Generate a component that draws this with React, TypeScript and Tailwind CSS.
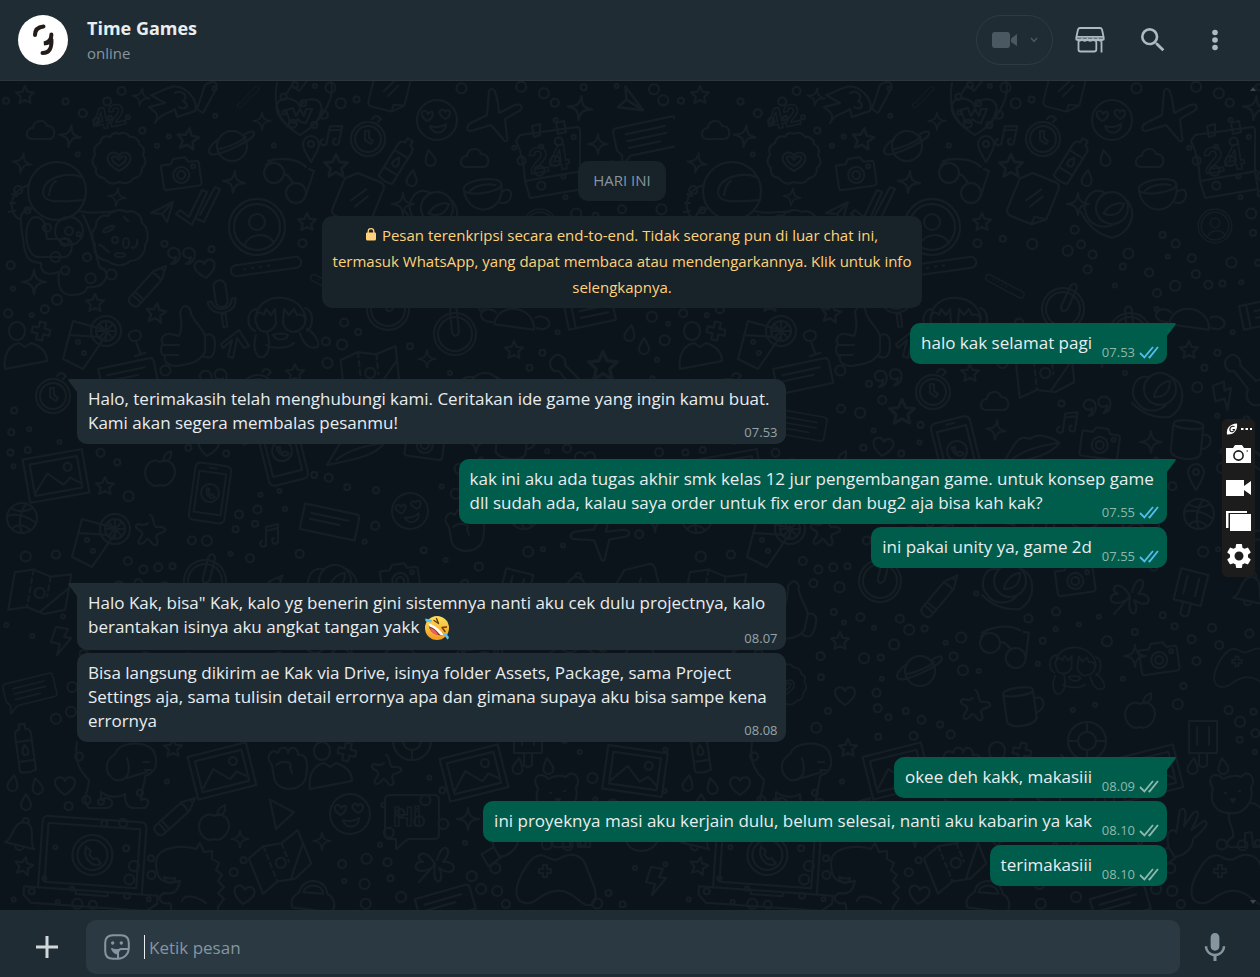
import type { ReactNode } from "react";
import { MdSearch, MdSettings } from "react-icons/md";

type Message = {
  lines: string[];
  time: string;
  sent?: boolean;
  read?: boolean;
  first?: boolean;
  wide?: boolean;
  emoji?: boolean;
};

const messages: Message[] = [
  { lines: ["halo kak selamat pagi"], time: "07.53", sent: true, read: true, first: true },
  {
    lines: [
      "Halo, terimakasih telah menghubungi kami. Ceritakan ide game yang ingin kamu buat.",
      "Kami akan segera membalas pesanmu!",
    ],
    time: "07.53",
    first: true,
    wide: true,
  },
  {
    lines: [
      "kak ini aku ada tugas akhir smk kelas 12 jur pengembangan game. untuk konsep game",
      "dll sudah ada, kalau saya order untuk fix eror dan bug2 aja bisa kah kak?",
    ],
    time: "07.55",
    sent: true,
    read: true,
    first: true,
    wide: true,
  },
  { lines: ["ini pakai unity ya, game 2d"], time: "07.55", sent: true, read: true },
  {
    lines: [
      'Halo Kak, bisa" Kak, kalo yg benerin gini sistemnya nanti aku cek dulu projectnya, kalo',
      "berantakan isinya aku angkat tangan yakk ",
    ],
    time: "08.07",
    first: true,
    wide: true,
    emoji: true,
  },
  {
    lines: [
      "Bisa langsung dikirim ae Kak via Drive, isinya folder Assets, Package, sama Project",
      "Settings aja, sama tulisin detail errornya apa dan gimana supaya aku bisa sampe kena",
      "errornya",
    ],
    time: "08.08",
    wide: true,
  },
  { lines: ["okee deh kakk, makasiii"], time: "08.09", sent: true, first: true },
  { lines: ["ini proyeknya masi aku kerjain dulu, belum selesai, nanti aku kabarin ya kak"], time: "08.10", sent: true },
  { lines: ["terimakasiii"], time: "08.10", sent: true },
];

// Every doodle is drawn around 0,0
const shapes: Record<string, ReactNode> = {
  star: <path d="M0-9 2.6-3.2 9-2.6 4.2 1.8 5.6 8 0 4.8-5.6 8-4.2 1.8-9-2.6-2.6-3.2Z" />,
  sparkle: <path d="M0-11C1-3 3-1 11 0 3 1 1 3 0 11-1 3-3 1-11 0-3-1-1-3 0-11Z" />,
  heart: <path d="M0 9C-6 5-11 0-10-5-8-10-2-10 0-5 2-10 8-10 10-5 11 0 6 5 0 9Z" />,
  cloud: <path d="M-10 8C-17 6-14-3-8-3-8-11 4-13 6-5 14-6 16 6 9 8Z" />,
  drop: <path d="M0-8C3-3 5 0 5 3A5 5 0 0 1-5 3C-5 0-3-3 0-8Z" />,
  plus: <path d="M-3-9H3V-3H9V3H3V9H-3V3H-9V-3H-3Z" strokeLinejoin="round" />,
  badge: (
    <>
      <path d="M0-26C5-29 9-26 11-23 16-24 20-20 20-16 25-13 26-9 24-5 28 0 27 5 23 8 23 14 20 18 15 18 11 24 6 24 0 22-6 25-11 24-15 18-21 18-24 13-23 8-28 4-27-2-24-5-26-11-24-15-19-17-18-23-13-25-9-23-7-27-3-28 0-26Z" />
      <path d="M0 11C-8 7-13 1-11-4-8-9-2-8 0-4 2-8 8-9 11-4 13 1 8 7 0 11Z" />
      <path d="M0 6C-5 3-8 0-7-3-4-5-2-3 0 0 2-3 4-5 7-3 8 0 5 3 0 6Z" />
    </>
  ),
  camera: (
    <>
      <path d="M-18-10H-9L-6-15H6L9-10H16Q19-10 19-7V12Q19 15 16 15H-16Q-19 15-19 12V-10Z" />
      <circle r="8" cy="2" />
      <circle r="4" cy="2" />
      <circle r="2" cx="13" cy="-5" />
    </>
  ),
  planet: (
    <>
      <circle r="15" />
      <path d="M-13-7C-21-2-26 6-21 8-14 11 24-7 22-13 21-16 16-14 12-11M-14 3C-8 3 9-4 14-9" />
    </>
  ),
  astronaut: (
    <>
      <circle cx="0" cy="0" r="29" />
      <path d="M24-14C12-20-14-14-14 2-13 14 8 10 28 9M-8 4C-7-3-5-8-1-10M-28-6C-50 0-49 24-36 29M-24 17C-40 20-37 28-34 48-32 68-28 71-16 72-17 84-6 84 2 81 0 96 4 104 15 104 24 104 30 101 30 96 47 98 53 85 47 78 38 80 41 50 26 24M-10 48H12C18 53 14 65 8 66H-20C-34 62-34 28-22 26-10 26-12 38-10 48M22 20C37 24 45 20 58 21M-42 12-47 12M-42 20-48 21M-40 5-45 3" />
      <circle cx="12" cy="40" r="14" />
      <circle cx="12" cy="40" r="4" />
    </>
  ),
  cookie: (
    <>
      <path d="M-24-10C-25-18-18-23-12-21-8-28 2-28 6-25 14-28 22-22 22-14 29-9 29 3 25 8 26 17 18 24 10 24 4 30-6 29-12 24-21 23-27 16-25 8-29 2-29-6-24-10Z" />
      <ellipse cx="-7" cy="-12" rx="6" ry="2" transform="rotate(-25)" />
      <ellipse cx="6" cy="6" rx="3" ry="5" />
      <circle cx="-5" cy="3" r="3" />
      <ellipse cx="0" cy="18" rx="5" ry="2" />
      <path d="M-21 8C-16 8-15 14-11 15M17 3C19 9 12 13 12 10M4-20 8-16" />
    </>
  ),
  paper: <path d="M-11 2 11-9 5 11 0 3ZM0 3 11-9" />,
  ticks: <path d="M-22 5-18 1-9 8 4-19 9-17-6 16ZM-1 10 6 13 22-20 17-22 2 6" />,
  avatar: (
    <>
      <circle r="28" />
      <circle r="23" />
      <circle r="8" cy="-5" />
      <path d="M-13 19C-8 5 12 5 17 16" />
    </>
  ),
  quotes: <path d="M-8-8A5 5 0 1 0-6 1C-6 4-8 6-11 8-3 8-1-1-3-5-4-7-6-8-8-8ZM7-8A5 5 0 1 0 9 1C9 4 7 6 4 8 12 8 14-1 12-5 11-7 9-8 7-8Z" />,
  pencil: <path d="M-6-14 0-27 6-14V20Q6 25 0 25-6 25-6 20ZM-6-14C-3-11-2-16 0-13 2-16 3-11 6-14M-6 13H6M-6 17H6M-2-22H2" />,
  bar: <path d="M-30-5H30A5 5 0 0 1 30 6H-30A5 5 0 0 1-30-5ZM-22 0H-21M-14 0H-13M-6 0H-5M2 0H3" />,
  mic: <path d="M-6-17A6 6 0 0 1 6-17V-2A6 6 0 0 1-6-2ZM-14-3C-14 14 14 14 14-3H10C10 9-10 9-10-3ZM-2 11H2V24H-2Z" />,
  monkey: (
    <>
      <path d="M-24-4C-22-30 22-30 26-2M-24-12C-34-10-34 6-25 10M25-13C35-10 33 6 27 10M-23 4C-28-6-20-12-16-6L-14-12-9-6-5-12-4 2C-7 12-20 14-23 4ZM3 2 4-12 9-6 14-12 17-6C24-8 28-2 23 6 15 14 6 12 3 2ZM-7 14C-3 12 5 12 8 14 6 20-4 20-7 14ZM-14 24C-7 28 8 28 14 22M-24 14C-28 26-24 38-17 36-11 34-9 22-13 12M20 12C24 26 32 28 37 26 42 22 32 10 27 8" />
    </>
  ),
  thumb: <path d="M-8 0C-4-8-6-16-7-24-4-34 4-30 4-22 10-10 16-8 18 0V16C10 30-4 28-10 30-18 30-24 26-22 20-28 18-26 10-24 8-28 2-22-3-16-2ZM-24 9H-8M-22 19H-9M18-1C26-4 28 2 28 8 28 20 24 24 16 20" />,
  drink: (
    <>
      <path d="M-8-22 28-12 2 26-18 16ZM-12-8 20-6" />
      <circle cx="25" cy="-12" r="15" />
      <circle cx="25" cy="-12" r="10" />
      <path d="M25-22V-2M15-12H35M18-19 32-5M32-19 18-5" />
      <circle cx="-3" cy="-1" r="2" />
      <circle cx="3" cy="10" r="2" />
    </>
  ),
  glass: <path d="M-6-8C-6-14 6-14 6-8 6 0-6 0-6-8ZM0-2 3 12M-3 13 8 11" />,
  person: <path d="M-8-20C-8-32 8-32 8-20 8-8-8-8-8-20ZM-12 18C-14 4-8-6 2-8L8-4 14-8C22-6 30 0 30 10Z" />,
  arrow: <path d="M-14-2 4-16 14 0 9 2 2-8-2 12-7 10-3-6-12 2Z" />,
  card: <path d="M-28-12H24Q28-12 28-8V14H-28ZM-20-4H18M-20 2H10" />,
  glasses: (
    <>
      <circle cx="-14" cy="-6" r="10" />
      <circle cx="8" cy="14" r="10" />
      <path d="M-20-18C-6-22 10-20 18-12M-22-14-14-20M18 16 26-8 21-10M-4-4C0-6 2 0 5 4" />
    </>
  ),
  unicorn: <path d="M-20 20C-14 10-22 8-26 4L-10 0C-18-4-20-6-24-8-10-12 0-24 14-10 20-4 22 2 20 8L2 14 0 6C-8 12-14 10-20 20ZM0-10C8-14 14-6 8-2 16 2 10 8 4 4M22 6 30-18C40-24 44-20 40-12L28 10Z" />,
  stopwatch: (
    <>
      <circle r="17" />
      <circle r="13" />
      <path d="M-3-8V1L3 5 5 2 1-1 1-8ZM4-20Q8-26 13-20L10-17" />
    </>
  ),
  smiley: (
    <>
      <circle r="20" />
      <path d="M-10 1C-16-3-17-8-13-9-11-10-10-8-9-6-7-9-4-9-4-6-4-3-7 0-10 1ZM8-1C3-4 1-8 4-10 6-11 8-9 8-8 9-11 13-10 13-7 13-4 11-2 8-1ZM-7 6C-2 8 5 7 9 4 9 14-4 16-7 6Z" />
    </>
  ),
  bottle: <path d="M-8-14Q-8-20-3-20V-25H3V-20Q8-20 8-14V22Q0 25-8 22ZM-8-8H8M-8 12H8M0-4C2-1 3 1 3 3A3 3 0 0 1-3 3C-3 1-2-1 0-4Z" />,
  plane: <path d="M-6-28C-2-34 2-28 4-6L20-14C28-16 28-10 24-8L10 0 12 18C14 22 10 24 8 20L-4 6-24 12C-30 12-28 6-24 4L-8-4Z" />,
  cup: <path d="M-18-10C-18-20 20-20 20-10 20-2-18-2-18-10ZM-18-10C-18 20 20 20 20-10M19-2C28-8 32 2 24 8 20 10 18 8 16 8M-12-8C-4-14 10-12 14-10" />,
  tablet: <path d="M-10-24H14Q20-24 20-18V14L8 24H-14Q-20 24-20 18V-14ZM8 24V16L20 14M-6 4 4-12M0 8 8-6" />,
  bubble: <path d="M-28-16H28Q32-16 32-12V10Q32 14 28 14H-20L-30 22-28 12-32 6V-12Q-32-16-28-16ZM-20-8H20M-20-1H20M-20 6H12" />,
  ufo: <path d="M-20 6C-20-18 18-18 20 6ZM-22 4C-32 6-36 0-34-4-30-10-22-8-20-6M22 4C32 6 36 0 34-4 30-10 22-8 20-6" />,
  book: <path d="M-24-12H24V12H-24ZM-17-12V12M-10-4H18M-10 3H18" />,
  map: (
    <>
      <path d="M-28-14-10-20 8-16 28-22V14L8 22-10 18-28 24ZM4 20 28-8" />
      <path d="M-10-20V18M8-16V4" strokeDasharray="5 4" />
      <circle cx="0" cy="2" r="5" />
    </>
  ),
  guitar: <path d="M-22-24C-16-30-8-22-10-16L6 0C14-4 24 2 20 10 16 12 16 18 10 24 0 26-6 18-2 8L-16-10C-24-8-28-18-22-24Z" />,
  wheel: (
    <>
      <circle r="21" />
      <circle r="17" />
      <path d="M-5-24C-4-30 2-28 2-22L4-2C2 4-2 2-3-2Z" />
    </>
  ),
  pin: <path d="M0 13C-5 5-8 0-8-5A8 8 0 0 1 8-5C8 0 5 5 0 13ZM0-8A3 3 0 1 0 0-2 3 3 0 1 0 0-8Z" />,
  note: <path d="M-4 7V-9L8-12V4M-4-5 8-8M-4 7A3 3 0 1 1-8 5M8 4A3 3 0 1 1 4 2" />,
  phone: (
    <>
      <path d="M-14-32H14Q20-32 20-26V26Q20 32 14 32H-14Q-20 32-20 26V-26Q-20-32-14-32ZM-15-23H15V23H-15ZM-4-28H4" />
      <circle r="10" />
      <path d="M-4-5C-6 2 2 8 6 4L3 1 0 2-2-1-1-4Z" />
    </>
  ),
  lips: <path d="M-30 12C-18-2-12-14-4-12L2-10C10-16 24-8 30-2 20 8 6 10-30 12ZM-20 8C-6 0 10-2 28-2" />,
  mug: <path d="M-15-14C-15-20 15-20 15-14 15-9-15-9-15-14ZM-15-14V14C-12 22 12 22 15 14V-14M15-5C25-10 28 6 15 9" />,
  helmet: (
    <>
      <circle r="16" />
      <path d="M-12-12C-28-14-30 6-24 12-16 26 0 22 6 16M12-12C26-4 26 18 10 28-10 30-22 20-28 14M-6 8C-4-4 6-8 10-8 10 4 4 8-6 8Z" />
    </>
  ),
  bolt: <path d="M-4-14 8-12 4-4 11-3-3 14 0 3-9 1Z" />,
  ball: (
    <>
      <circle r="15" />
      <path d="M-15-2C-4-6 8 0 14 5M4-14C-2-6-4 6 0 15M-11-10C-2-4 8-8 11-10M-10 11C-4 4 4 8 8 12" />
    </>
  ),
  dog: <path d="M-38-24C-42 0-30 10-26 14-26 24-34 34-26 42H-8C0 40-2 32-10 32L-14 34V26C-6 32 4 32 10 28 10 40 14 42 20 42H30C38 34 30 32 26 34 26 22 30 20 30 10 42 6 44-4 38-16 28-26 4-24 0-12-12-4-10 8 0 14 14 16 16 4 12-8M12 12 32 6M28-4H34M30 4H36" />,
  picture: (
    <>
      <path d="M-30-22H30V22H-30ZM-24-16H24V16H-24ZM-24 14-8-4 6 10 14 4 24 12" />
      <circle cx="13" cy="-7" r="4" />
    </>
  ),
  fist: <path d="M-16-4C-24-12-16-22-10-16-8-24 0-22 0-16 2-24 10-22 10-14 20-16 20-4 18 8 14 24-12 24-14 8ZM-12-4C-4-10 6-6 2-2L4 4" />,
  buoy: (
    <>
      <circle r="19" />
      <circle r="9" />
      <path d="M0-19V-9M0 9V19M-19 0H-9M9 0H19" />
    </>
  ),
  starfish: <path d="M0-16C4-16 3-5 6-4 12-5 16-3 15 0 12 3 6 2 6 6 9 12 7 15 4 14 0 12 0 7-3 8-8 15-13 14-11 9-8 4-6 3-9 0-16-3-15-7-11-7-6-5-4-6-2-8-3-16 0-16Z" />,
  bell: <path d="M-15 10C-8 6-12-14 0-14 12-14 8 6 15 10ZM-4 10C-4 16 4 16 4 10M-3-14C-3-20 3-20 3-14" />,
  laptop: (
    <>
      <path d="M-46-42H46Q52-42 52-36V30H-52V-36Q-52-42-46-42ZM-46-35H46V24H-46ZM-66 30H-14V34H18V30H68V38L58 46H-58L-66 38Z" />
      <circle r="20" cy="-6" />
      <circle r="15" cy="-6" />
      <path d="M-7-14C-10-2 2 8 9 2L5-3 1-2-3-6-2-10Z" />
    </>
  ),
  apple: <path d="M0-9C-6-13-15-8-15 2-14 12-6 17 0 14 8 17 15 8 15 0 14-9 6-13 0-9ZM3-10C4-18 8-18 11-20 12-12 8-9 3-10Z" />,
  dino: <path d="M-34-24C-34-42-4-42 6-38L10-44 14-35 22-36 22-28 29-24 26-17 32-12 28-6 34 0 28 6 34 12 28 20V36M-34-24C-34-8-28-2-10-6-12 4-16 8-26 6-34 10-30 18-20 16-16 24-22 34-30 38M-8 14C-6 6 8 10 16 16M-26-10C-20-8-18-8-15-9-16-2-24-2-26-10Z" />,
  cursor: <path d="M-10-16 12 0-8 14Z" />,
  clover: <path d="M0 0C-12-20-22-6-12-2-24-4-22 16 0 2-4 24 12 20 4 4 22 16 24-4 8-2 20-14 8-26 2-4M0 0-16 18" />,
  car: <path d="M-20 10C-24 0-16-4-14-6-12-22 12-22 14-6 20-4 24 4 20 12ZM-10-6C-8-16 8-16 10-6Z" />,
  bear: <path d="M-18-8C-26-22-14-26-8-18 0-22 6-22 10-20 18-30 26-16 20-10 24 8 10 18-2 16-16 16-22 4-18-8ZM-6-4H-5M8-6H9M0 2H4L2 5ZM-2 16C-4 28 4 30 2 40-6 44-6 52 4 50H14V36C22 36 20 30 22 50H34V20C32 10 24 6 20 6" />,
  pad: <path d="M-30 20C-50 16-30-20-20-26-8-32-8-20 4-24 20-34 30-24 32-14 38 0 46 16 36 22 24 24 20 6 0 8-16 10-18 22-30 20ZM-16-14H-12V-18H-8V-14H-4V-10H-8V-6H-12V-10H-16Z" />,
  hand: <path d="M-14 20C-22 4-14 0-10 4L-12-18C-8-24-5-20-4-4L2-20C8-24 8-18 4-2L14-14C20-14 18-8 8 6 10 16 2 26-6 28ZM-14 20-24 30-14 40-4 28" />,
  popsicle: <path d="M-14-20H14V12H-14ZM-4 12V24Q0 28 4 24V12M-6-14V4M6-14V4" />,
};

type Doodle = [kind: string, x: number, y: number, turn?: number, size?: number];

const doodles: Doodle[] = [
  ["star", 25, 14], ["cloud", 41, 50], ["sparkle", 70, 55, 8], ["sparkle", 141, 16, 10, 0.8], ["unicorn", 175, 22],
  ["badge", 119, 79], ["camera", 181, 92, -8], ["planet", 232, 65], ["star", 188, 58, 8, 1.2], ["sparkle", 234, 101, 6],
  ["sparkle", 262, 40, 0, 0.8], ["sparkle", 22, 82, 10, 0.9], ["bar", 248, 16, -45, 0.4], ["note", 332, 55, 12], ["pin", 311, 68],
  ["star", 336, 85, 0, 1.3], ["glasses", 288, 98], ["astronaut", 57, 110], ["cookie", 120, 156], ["paper", 162, 130],
  ["ticks", 198, 128], ["sparkle", 117, 116, 8, 0.8], ["avatar", 257, 146], ["star", 307, 141], ["quotes", 182, 175],
  ["heart", 205, 188, -8], ["pencil", 148, 205, 42], ["bar", 266, 185, -8], ["mic", 222, 222, -8], ["sparkle", 34, 201, 0, 1.1],
  ["star", 95, 222], ["star", 156, 232, 8, 1.1], ["monkey", 280, 240], ["thumb", 187, 255], ["drink", 81, 262],
  ["glass", 136, 262, -8], ["person", 17, 270], ["plus", 41, 250, 12], ["arrow", 235, 265], ["card", 128, 294, -12],
  ["star", 295, 292], ["tablet", 390, 8, 14, 0.9], ["smiley", 437, 39], ["stopwatch", 368, 58], ["bottle", 397, 80, 32],
  ["cloud", 475, 78], ["plane", 495, 38], ["sparkle", 580, 27, 8, 1.1], ["sparkle", 598, 63, 0, 0.9], ["paper", 630, 18, 80, 1.2],
  ["bubble", 647, 57, -12], ["cup", 483, 116, -8], ["helmet", 437, 127, 20], ["sparkle", 403, 123], ["tablet", 358, 118, 22],
  ["avatar", 540, 145, 0, 0.6], ["bar", 330, 205, 28, 0.6], ["wheel", 388, 228, 30], ["wheel", 455, 253], ["ufo", 515, 240, 8],
  ["book", 590, 232, -12], ["map", 370, 290, -6], ["star", 514, 269], ["star", 603, 285, 0, 1.6], ["sparkle", 427, 278, 0, 0.8],
  ["drop", 630, 252, 12], ["drop", 644, 265], ["drop", 430, 77, -12], ["drop", 412, 97, 8], ["quotes", 214, 297, -6],
  ["stopwatch", 258, 311], ["cloud", 320, 321], ["star", 227, 331, 0, 1.4], ["phone", 282, 370, -14], ["heart", 208, 366, 8],
  ["sparkle", 321, 349, 8, 0.9], ["note", 393, 342, 8], ["lips", 355, 368, -8], ["camera", 425, 362, 8], ["sparkle", 476, 361],
  ["mug", 512, 358, 6], ["pin", 521, 396], ["quotes", 423, 325, -12], ["helmet", 485, 308], ["bolt", 548, 315, -30],
  ["guitar", 575, 300], ["ball", 524, 433], ["stopwatch", 53, 315], ["picture", 56, 395, -10], ["bubble", 125, 345, 10, 0.8],
  ["phone", 210, 412, 8, 0.9], ["apple", 160, 390], ["star", 105, 405], ["cloud", 620, 345, 0, 1.3], ["cup", 625, 400, 10],
  ["heart", 585, 380], ["sparkle", 655, 440], ["plane", 600, 455, 20], ["ball", 22, 437], ["drink", 90, 460],
  ["starfish", 150, 450], ["card", 330, 440, 12], ["smiley", 410, 430, -10, 0.9], ["fist", 465, 450], ["note", 270, 455],
  ["bell", 575, 510, 12], ["map", 40, 510, 10], ["thumb", 115, 530, 12], ["wheel", 205, 500, 20], ["pencil", 265, 515, 40],
  ["helmet", 335, 500], ["camera", 400, 498, -8], ["clover", 455, 515], ["popsicle", 515, 510, 14], ["tablet", 640, 510, -14],
  ["star", 165, 560], ["bolt", 60, 560], ["glasses", 330, 565, -12], ["planet", 245, 590], ["monkey", 400, 585, 4, 0.8],
  ["sparkle", 460, 575], ["camera", 484, 577, -8], ["pad", 570, 590, 0, 0.8], ["cloud", 640, 570], ["bubble", 30, 610, -14, 0.8],
  ["badge", 110, 605, 0, 0.8], ["heart", 170, 615], ["bottle", 25, 668, -8], ["starfish", 300, 625], ["mug", 345, 625, -8],
  ["apple", 465, 632], ["card", 625, 632, 12], ["drop", 13, 702, 10], ["drop", 37, 705, -14], ["drop", 26, 721],
  ["heart", 65, 705], ["dog", 115, 685], ["star", 173, 667], ["picture", 222, 690, -14], ["fist", 288, 688],
  ["person", 322, 690], ["plus", 347, 671, 12], ["buoy", 412, 660], ["starfish", 386, 690], ["picture", 474, 692, -14],
  ["bell", 22, 755, 14], ["laptop", 92, 780, 4], ["star", 24, 785, 12], ["pencil", 175, 735, 48], ["apple", 214, 744],
  ["dino", 190, 806], ["cursor", 282, 733, -8], ["map", 280, 780, -22], ["smiley", 350, 733], ["sparkle", 240, 758, 0, 0.8],
  ["sparkle", 322, 760, 0, 0.8], ["sparkle", 468, 738], ["clover", 435, 783], ["heart", 244, 814, 8], ["car", 313, 818, 4],
  ["popsicle", 528, 660], ["drop", 518, 685, 8], ["drop", 548, 685, -8], ["bear", 556, 716], ["hand", 512, 750, 14],
  ["pad", 555, 802], ["picture", 635, 690, 8], ["fist", 640, 750], ["card", 445, 822, -16], ["bolt", 655, 800],
];

// Small rings fill whatever room the doodles leave free
const rings: { x: number; y: number; r: number }[] = [];
let seed = 7;
const next = () => (seed = (seed * 16807) % 2147483647) / 2147483647;
for (let i = 0; i < 2600; i++) {
  const x = 6 + next() * 663;
  const y = 4 + next() * 820;
  const r = [2, 3, 4, 5][Math.floor(next() * 4)];
  const small = ["star", "sparkle", "heart", "drop", "plus", "paper", "note", "quotes", "pin", "bolt"];
  const free =
    doodles.every(([kind, dx, dy]) => Math.hypot(dx - x, dy - y) > (small.includes(kind) ? 16 : 32) + r) &&
    rings.every((ring) => Math.hypot(ring.x - x, ring.y - y) > 14);
  if (free) rings.push({ x, y, r });
}

function Wallpaper() {
  return (
    <svg className="absolute inset-0 h-full w-full" aria-hidden="true">
      <defs>
        <pattern id="doodles" width="675" height="830" patternUnits="userSpaceOnUse">
          <g fill="none" stroke="#151e24" strokeWidth="2" strokeLinejoin="round" strokeLinecap="round">
            {doodles.map(([kind, x, y, turn = 0, size = 1], i) => (
              <g key={i} transform={`translate(${x} ${y}) rotate(${turn}) scale(${size})`}>
                {shapes[kind]}
              </g>
            ))}
            {rings.map((ring, i) => (
              <circle key={i} cx={ring.x} cy={ring.y} r={ring.r} />
            ))}
            {/* heart with a flame, calendar and speech bubble */}
            <path d="M300 54C282 44 272 28 277 2M300 54C318 44 336 20 331 0M300 54C280 42 272 28 279 20 288 14 298 20 300 26 304 16 318 16 321 24 324 34 314 46 300 54ZM287 12 292 4 299 10 307 0" />
            <path d="M286 29 293 27 296 35 300 28 304 35 306 28 312 28 306 42 301 41 298 38 294 42 290 41Z" />
            <path d="M520 54 577 46Q580 46 580 50V90L583 108 530 117 525 100Q524 76 516 60ZM525 100 582 90M532 45 540 43V54L534 56ZM556 42 564 40 566 51 558 53Z" />
            <path d="M390 714H434Q439 714 439 719V753Q439 758 434 758H408L396 768V758H390Q385 758 385 753V719Q385 714 390 714Z" />
          </g>
          <g fill="none" stroke="#151e24" strokeWidth="1.5" fontFamily="Liberation Sans, sans-serif" fontWeight="700">
            <text x="92" y="46" fontSize="30" transform="rotate(-12 110 36)">42</text>
            <text x="529" y="90" fontSize="36" transform="rotate(-8 550 80)">24</text>
            <text x="393" y="745" fontSize="28">Hi</text>
          </g>
        </pattern>
      </defs>
      <rect width="100%" height="100%" fill="url(#doodles)" />
    </svg>
  );
}

function Ticks({ read }: { read?: boolean }) {
  return (
    <svg
      viewBox="0 0 20 13"
      className={read ? "h-[13px] w-5 text-[#53bdeb]" : "h-[13px] w-5 text-[#8fb8ad]"}
      fill="none"
      stroke="currentColor"
      strokeWidth="1.8"
      role="img"
      aria-label={read ? "Dibaca" : "Terkirim"}
    >
      <path d="M1 7 5.4 11.4 14 1M9.6 10.6 10.6 11.4 19 1" />
    </svg>
  );
}

function LaughEmoji() {
  return (
    <svg viewBox="0 0 26 26" className="inline-block h-[26px] w-[26px] align-middle" role="img" aria-label="Tertawa terguling">
      <defs>
        <linearGradient id="face" x1="0" y1="0" x2="0" y2="1">
          <stop offset="0" stopColor="#fde15a" />
          <stop offset="1" stopColor="#f59a1c" />
        </linearGradient>
      </defs>
      <circle cx="13" cy="13" r="12" fill="url(#face)" />
      <path d="M5 9C4 15 10 21 19 20.500 15 16 10 11 5 9Z" fill="#8a3b22" />
      <path d="M6 13C7 17 10 19.500 14 20 13 17 10 14 6 13Z" fill="#ee5f6e" />
      <path d="M4.500 8.500C10 9.500 17 14.500 19.500 20.500 17 20.500 16 19.500 15 18.500 12 15 9 12.500 5.500 11.500Z" fill="#fff" />
      <path d="M10 5.500 14.500 8.500 12.500 3.500M22.500 12 18 12.500 21 16.500" fill="none" stroke="#6b3a12" strokeWidth="1.400" strokeLinecap="round" strokeLinejoin="round" />
      <path d="M1.500 3.500 8 5C8 7.500 5.500 8 4.500 7 2.500 7.500.500 5.500 1.500 3.500ZM23.500 24.500 19.500 19.500C21 17.500 24 18.500 23.500 20.500 25.500 21.500 25 24 23.500 24.500Z" fill="#5cc6ee" />
    </svg>
  );
}

function Bubble({ message }: { message: Message }) {
  const { lines, time, sent, read, first, wide, emoji } = message;
  return (
    <li className={`flex ${sent ? "justify-end" : "justify-start"} ${first ? "mt-[15px]" : "mt-[3px]"}`}>
      <div
        className={`relative rounded-[10px] px-[11px] pt-2 pb-[9px] ${wide ? "w-[65%]" : ""} ${
          sent ? "bg-[#005c4b]" : "bg-[#202c33]"
        } ${first ? (sent ? "rounded-tr-none" : "rounded-tl-none") : ""}`}
      >
        {first && (
          <svg
            viewBox="0 0 9 13"
            className={
              sent
                ? "absolute top-0 left-full h-[13px] w-[9px] text-[#005c4b]"
                : "absolute top-0 right-full h-[13px] w-[9px] -scale-x-100 text-[#202c33]"
            }
            fill="currentColor"
            aria-hidden="true"
          >
            <path d="M0 0H7.500C9 0 9 1.200 8.400 2L0 13Z" />
          </svg>
        )}
        <p className="text-[17px] leading-6 whitespace-nowrap text-[#e9edef]">
          {lines.map((line, i) => (
            <span key={i}>
              {i > 0 && <br />}
              {line}
            </span>
          ))}
          {emoji && <LaughEmoji />}
          {sent && !wide && <span className="inline-block w-16" />}
        </p>
        <div className="absolute right-2 bottom-1 flex items-center gap-1 text-[13px] leading-4">
          <time className={sent ? "text-[#8fb8ad]" : "text-[#98a3a9]"}>{time}</time>
          {sent && <Ticks read={read} />}
        </div>
      </div>
    </li>
  );
}

function Header() {
  return (
    <header className="flex h-[81px] items-center border-b border-[#2b363c] bg-[#202c33] pr-[30px] pl-[18px] text-[#aebac1]">
      <svg viewBox="0 0 50 50" className="h-[50px] w-[50px]" role="img" aria-label="Time Games">
        <circle cx="25" cy="25" r="25" fill="#fff" />
        <g fill="none" stroke="#231c19" strokeWidth="4" strokeLinecap="round">
          <path d="M17 20C17 15 20 12 25.500 11.500" />
          <path d="M33.400 19.500C33.500 24.500 31 27.500 26 28.500C30 28.500 32.500 27 33.400 24C34 33 31.500 38 24.500 38" />
        </g>
      </svg>
      <div className="ml-[19px] flex-1 pb-[2px]">
        <h1 className="text-lg leading-7 font-bold text-[#e9edef]">Time Games</h1>
        <p className="text-[15px] leading-[22px] text-[#8696a0]">online</p>
      </div>
      <button className="flex h-[50px] w-[77px] items-center justify-center gap-3 rounded-full border border-[#2f3b43] text-[#4a5961]" aria-label="Panggilan video">
        <svg viewBox="0 0 26 16" className="h-4 w-[26px]" fill="currentColor" aria-hidden="true">
          <rect width="18" height="16" rx="3" />
          <path d="M19 6.500 25 2V14L19 10Z" />
        </svg>
        <svg viewBox="0 0 8 6" className="h-[6px] w-2" fill="none" stroke="currentColor" strokeWidth="1.400" aria-hidden="true">
          <path d="M1 1 4 4.500 7 1" />
        </svg>
      </button>
      <button className="ml-[22px]" aria-label="Katalog">
        <svg viewBox="0 0 30 26" className="h-[26px] w-[30px]" fill="none" stroke="currentColor" strokeWidth="1.800" aria-hidden="true">
          <path d="M5 1H25Q26.500 1 27 2.500L28.700 10.500V12.500H1.300V10.500L3 2.500Q3.500 1 5 1ZM1.500 9.800H28.500" strokeLinejoin="round" />
          <path d="M2 12C3 14.500 6 14.500 7 12 8.500 14.500 11 14.500 12.500 12 14 14.500 16.500 14.500 18 12 19.500 14.500 22 14.500 23 12 24.500 14.500 27 14.500 28 12M3.500 14V22.500Q3.500 24.500 5.500 24.500H19Q21.300 24.500 21.300 22.500V14.500M26.500 14.500V25.500" />
        </svg>
      </button>
      <button className="ml-8" aria-label="Cari">
        <MdSearch size={32} />
      </button>
      <button className="ml-[31px]" aria-label="Menu">
        <svg viewBox="0 0 30 30" className="h-[30px] w-[30px]" fill="currentColor" aria-hidden="true">
          <circle cx="15" cy="7.500" r="2.800" />
          <circle cx="15" cy="15" r="2.800" />
          <circle cx="15" cy="22.500" r="2.800" />
        </svg>
      </button>
    </header>
  );
}

function CaptureBar() {
  return (
    <aside className="absolute top-[419px] right-[5px] flex w-[33px] flex-col items-center rounded-[5px] bg-[#1c1c1c] pt-1 pb-[6px] text-white">
      <svg viewBox="0 0 26 12" className="h-3 w-[26px]" aria-hidden="true">
        <path d="M1 11.500C0 5 4 1 11 .500 12 7 8 12 1 11.500Z" fill="#fff" />
        <path d="M8.500 3.500C5 2.500 3.500 5 4 7.500 5 9.500 8 9 8.500 6.500H6.500" fill="none" stroke="#1c1c1c" strokeWidth="1.200" />
        <path d="M15 5H17.500V7H15ZM19.500 5H22V7H19.500ZM24 5H26V7H24Z" fill="#fff" />
      </svg>
      <button className="mt-[10px]" aria-label="Tangkap layar">
        <svg viewBox="0 0 25 18" className="h-[18px] w-[25px]" aria-hidden="true">
          <path d="M0 3H7L9 0H16L18 3H25V18H0Z" fill="#fff" />
          <circle cx="12.500" cy="10.500" r="4.600" fill="#fff" stroke="#1c1c1c" strokeWidth="1.600" />
          <path d="M20.500 5.500H22V6.500H20.500Z" fill="#1c1c1c" />
        </svg>
      </button>
      <button className="mt-[17px]" aria-label="Rekam layar">
        <svg viewBox="0 0 25 16" className="h-4 w-[25px]" fill="#fff" aria-hidden="true">
          <path d="M0 0H18V6L25 1V15L18 10V16H0Z" />
        </svg>
      </button>
      <button className="mt-[15px]" aria-label="Galeri">
        <svg viewBox="0 0 25 20" className="h-5 w-[25px]" fill="#fff" aria-hidden="true">
          <path d="M0 0H21V2H2.500V17H0ZM4 3H25V20H4Z" />
        </svg>
      </button>
      <button className="mt-[10px]" aria-label="Pengaturan">
        <MdSettings size={30} />
      </button>
    </aside>
  );
}

function Composer() {
  return (
    <footer className="flex items-center bg-[#202c33] pt-[10px] pr-[30px] pb-[3px] pl-[35px]">
      <button className="text-[#d1d7db]" aria-label="Lampirkan">
        <svg viewBox="0 0 24 24" className="h-6 w-6" fill="none" stroke="currentColor" strokeWidth="3" aria-hidden="true">
          <path d="M12 1V23M1 12H23" />
        </svg>
      </button>
      <div className="ml-[27px] flex h-[54px] flex-1 items-center rounded-[10px] bg-[#2a3942] pl-[18px]">
        <button className="text-[#8696a0]" aria-label="Stiker">
          <svg viewBox="0 0 26 26" className="h-[26px] w-[26px]" fill="none" stroke="currentColor" strokeWidth="2" strokeLinejoin="round" aria-hidden="true">
            <path d="M9 1.200H17Q24.800 1.200 24.800 9V14C24.800 20 20 24.800 14 24.800H9Q1.200 24.800 1.200 17V9Q1.200 1.200 9 1.200Z" />
            <path d="M14 24.500V19Q14 15 18 15H24.500" />
            <path d="M7.500 14.500C11 16 15 16 18 14.500 15 16 14 18 14 20 10.500 20 8.500 18 7.500 14.500Z" fill="currentColor" strokeWidth="1" />
            <circle cx="8.700" cy="9" r="1.700" fill="currentColor" stroke="none" />
            <circle cx="17.300" cy="9" r="1.700" fill="currentColor" stroke="none" />
          </svg>
        </button>
        <span className="ml-[14px] h-6 w-px bg-[#e9edef]" />
        <input
          type="text"
          aria-label="Ketik pesan"
          placeholder="Ketik pesan"
          className="ml-1 h-full flex-1 bg-transparent text-[17px] text-[#e9edef] outline-none placeholder:text-[#8696a0]"
        />
      </div>
      <button className="ml-5 text-[#8696a0]" aria-label="Rekam suara">
        <svg viewBox="0 0 24 24" className="h-[30px] w-[30px]" fill="currentColor" aria-hidden="true">
          <path d="M12 14.900c2 0 3.500-1.500 3.500-3.500V4.350c0-2-1.500-3.500-3.500-3.500S8.500 2.350 8.500 4.350v7.060c0 2 1.500 3.500 3.500 3.500zm6.200-3.500c0 3.500-2.900 6-6.200 6s-6.200-2.500-6.200-6h-2c0 4 3.200 7.300 7 7.900v3.900h2.400v-3.900c3.900-.600 7-3.900 7-7.900z" />
        </svg>
      </button>
    </footer>
  );
}

export default function App() {
  return (
    <div className="relative flex min-h-screen flex-col bg-[#0b141a] font-['Open_Sans',sans-serif]">
      <Header />
      <main className="relative flex-1">
        <Wallpaper />
        <div className="relative pt-20 pr-[93px] pb-6 pl-[77px]">
          <div className="flex flex-col items-center gap-[15px]">
            <p className="rounded-[10px] bg-[#182229] px-[15px] pt-[7px] pb-[9px] text-[15px] leading-6 text-[#8696a0]">HARI INI</p>
            <button className="w-[600px] max-w-full rounded-[10px] bg-[#182229] px-2 pt-[6px] pb-2 text-[15px] leading-[26px] text-[#ffd279]">
              <svg viewBox="0 0 10 13" className="mr-[6px] mb-1 inline-block h-[13px] w-[10px]" aria-hidden="true">
                <path d="M0 5.500Q0 4.500 1 4.500H9Q10 4.500 10 5.500V11Q10 12.500 8.500 12.500H1.500Q0 12.500 0 11Z" fill="currentColor" />
                <path d="M2.200 5V3.500A2.800 2.800 0 0 1 7.800 3.500V5" fill="none" stroke="currentColor" strokeWidth="1.300" />
              </svg>
              Pesan terenkripsi secara end-to-end. Tidak seorang pun di luar chat ini,
              <br />
              termasuk WhatsApp, yang dapat membaca atau mendengarkannya. Klik untuk info
              <br />
              selengkapnya.
            </button>
          </div>
          <ul>
            {messages.map((message, i) => (
              <Bubble key={i} message={message} />
            ))}
          </ul>
        </div>
        <svg viewBox="0 0 6 4" className="absolute top-[6px] right-1 h-1 w-[6px] fill-[#3b464c]" aria-hidden="true">
          <path d="M3 0 6 4H0Z" />
        </svg>
        <svg viewBox="0 0 6 4" className="absolute right-1 bottom-[6px] h-1 w-[6px] fill-[#3b464c]" aria-hidden="true">
          <path d="M0 0H6L3 4Z" />
        </svg>
      </main>
      <Composer />
      <CaptureBar />
    </div>
  );
}
